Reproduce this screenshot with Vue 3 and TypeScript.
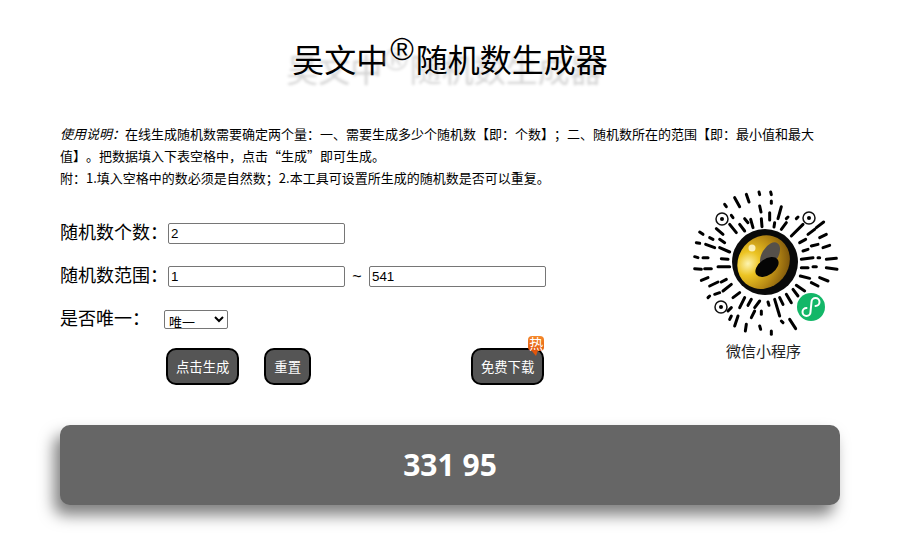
<script lang="ts" setup>
import { ref } from 'vue'

const count = ref('2')
const min = ref('1')
const max = ref('541')
const unique = ref('yes')

// strokes of the mini program code, read off the reference at 3x (centre 256,248)
const strokes: number[][] = [
  [165, 55, 180, 82], [200, 45, 208, 68], [238, 38, 240, 46], [273, 38, 275, 46], [275, 65, 275, 72], [305, 82, 295, 118],
  [240, 80, 244, 98], [195, 118, 205, 130], [135, 75, 140, 82], [155, 108, 160, 115], [110, 148, 130, 165], [150, 135, 170, 160],
  [180, 135, 195, 155], [213, 120, 220, 145], [245, 118, 247, 142], [270, 100, 270, 122], [285, 130, 283, 143], [320, 118, 325, 113],
  [305, 150, 320, 130], [335, 170, 370, 135], [350, 118, 355, 113], [410, 145, 432, 128], [385, 165, 405, 150], [420, 175, 440, 165],
  [360, 190, 378, 180], [395, 200, 415, 195], [430, 205, 450, 198], [370, 215, 385, 210], [365, 240, 400, 235], [415, 235, 420, 235],
  [440, 240, 470, 237], [365, 265, 385, 265], [400, 262, 410, 262], [440, 265, 472, 270], [362, 290, 390, 297], [420, 295, 445, 305],
  [395, 310, 415, 320], [350, 318, 375, 335], [340, 330, 355, 350], [320, 345, 335, 370], [300, 355, 310, 375], [285, 360, 300, 410],
  [265, 368, 268, 378], [330, 420, 348, 448], [305, 425, 310, 430], [275, 455, 275, 465], [240, 365, 225, 385], [245, 395, 245, 405],
  [215, 360, 205, 378], [225, 395, 215, 415], [180, 340, 160, 355], [195, 355, 180, 385], [175, 410, 165, 440], [200, 435, 197, 455],
  [240, 440, 243, 450], [145, 395, 155, 385], [150, 420, 155, 410], [155, 315, 130, 335], [105, 345, 120, 340], [85, 355, 90, 350],
  [140, 300, 125, 308], [90, 320, 115, 308], [65, 303, 85, 295], [150, 262, 115, 262], [95, 268, 75, 268], [65, 270, 45, 268],
  [145, 240, 125, 238], [85, 235, 70, 235], [55, 235, 45, 232], [150, 218, 120, 205], [105, 205, 78, 195], [60, 192, 50, 190],
  [135, 190, 120, 180], [100, 180, 90, 175], [70, 165, 60, 158],
].map((s) => s.map((v, i) => (v - (i % 2 ? 248 : 256)) / 3))
</script>

<template>
  <div class="page">
    <h1 class="title">吴文中<sup>®</sup>随机数生成器</h1>

    <p class="intro">
      <em>使用说明：</em>在线生成随机数需要确定两个量：一、需要生成多少个随机数【即：个数】；二、随机数所在的范围【即：最小值和最大值】。把数据填入下表空格中，点击“生成”即可生成。<br />
      附：1.填入空格中的数必须是自然数；2.本工具可设置所生成的随机数是否可以重复。
    </p>

    <div class="main">
      <div class="form">
        <div class="row">
          <label class="label">随机数个数：</label>
          <input v-model="count" class="field" type="text" />
        </div>
        <div class="row">
          <label class="label">随机数范围：</label>
          <input v-model="min" class="field" type="text" />
          <span class="tilde">~</span>
          <input v-model="max" class="field" type="text" />
        </div>
        <div class="row">
          <label class="label label-select">是否唯一：</label>
          <select v-model="unique" class="choice">
            <option value="yes">唯一</option>
            <option value="no">不唯一</option>
          </select>
        </div>
        <div class="actions">
          <button class="btn" type="button">点击生成</button>
          <button class="btn" type="button">重置</button>
          <button class="btn btn-download" type="button">
            免费下载
            <span class="hot">热</span>
          </button>
        </div>
      </div>

      <div class="mini">
        <svg class="code" width="150" height="150" viewBox="-75 -75 150 150">
          <defs>
            <radialGradient id="gold" cx="30%" cy="28%" r="90%">
              <stop offset="0" stop-color="#fdf4b0" />
              <stop offset="0.25" stop-color="#ecc423" />
              <stop offset="0.6" stop-color="#b98a14" />
              <stop offset="1" stop-color="#6a4509" />
            </radialGradient>
          </defs>
          <line
            v-for="(s, i) in strokes"
            :key="i"
            :x1="s[0]"
            :y1="s[1]"
            :x2="s[2]"
            :y2="s[3]"
            stroke="#000"
            stroke-width="3"
            stroke-linecap="round"
          />
          <g fill="none" stroke="#111" stroke-width="1.5">
            <circle cx="-43" cy="-43" r="6" />
            <circle cx="44" cy="-44" r="6" />
            <circle cx="-44" cy="45" r="6" />
          </g>
          <circle cx="-43" cy="-43" r="2" />
          <circle cx="44" cy="-44" r="2" />
          <circle cx="-44" cy="45" r="2" />
          <circle r="33" fill="#0a0a0a" />
          <ellipse cx="-1" cy="-1" rx="28" ry="25" fill="url(#gold)" transform="rotate(-50)" />
          <ellipse cx="5" cy="-7" rx="14" ry="8" fill="#55504a" transform="rotate(-58 5 -7)" />
          <ellipse cx="2" cy="5" rx="13" ry="8" fill="#050505" transform="rotate(-35 2 5)" />
          <circle cx="-13" cy="-14" r="3.5" fill="#fff8d0" opacity="0.85" />
          <circle cx="46" cy="45" r="15.5" fill="#fff" />
          <circle cx="46" cy="45" r="14" fill="#13b768" />
          <path
            d="M41.5 46A4 4 0 1 0 45.5 50L46.5 40A4 4 0 1 1 50.5 44"
            fill="none"
            stroke="#fff"
            stroke-width="2"
            stroke-linecap="round"
          />
        </svg>
        <div class="caption">微信小程序</div>
      </div>
    </div>

    <div class="result">331 95</div>
  </div>
</template>

<style scoped>
.page {
  box-sizing: border-box;
  width: 920px;
  height: 539px;
  padding: 0 80px 0 60px;
  overflow: hidden;
  color: #000;
  font-family: "Liberation Sans", "Noto Sans CJK SC", sans-serif;
  text-spacing-trim: space-all;
}

.title {
  margin: 0;
  padding-top: 28px;
  line-height: 60px;
  height: 60px;
  font-size: 32px;
  font-weight: 400;
  text-align: center;
  text-shadow: -6px 10px 3px #d4d4d4;
  font-family: "Noto Sans CJK SC", sans-serif;
}

.title sup {
  padding: 0 2px;
  font-family: "Liberation Sans", sans-serif;
  font-size: 32px;
  line-height: 0;
  vertical-align: 12px;
}

.intro {
  width: 760px;
  margin: 35px 0 0;
  font-size: 13px;
  line-height: 22px;
  font-family: "Noto Sans CJK SC", sans-serif;
}

.main {
  display: flex;
  width: 780px;
}

.form {
  flex: 1;
  padding-top: 23px;
}

.row {
  display: flex;
  align-items: center;
  height: 43px;
}

.label {
  width: 108px;
  flex: none;
  margin-bottom: 5px;
  font-size: 18px;
  font-family: "Noto Sans CJK SC", sans-serif;
}

.label-select {
  width: 104px;
}

.field {
  box-sizing: border-box;
  width: 177px;
  height: 21px;
  padding: 1px 2px;
  border: 1px solid #767676;
  border-radius: 2px;
  font-family: "Liberation Sans", sans-serif;
  font-size: 13.33px;
  background: #fff;
}

.tilde {
  width: 24px;
  text-align: center;
  font-size: 16px;
}

.choice {
  box-sizing: border-box;
  width: 64px;
  height: 19px;
  font-size: 13px;
  font-family: "Noto Sans CJK SC", sans-serif;
  border: 1px solid #767676;
  border-radius: 2px;
  background-color: #fff;
}

.actions {
  display: flex;
  gap: 25px;
  padding-left: 106px;
  margin-top: 7px;
}

.btn {
  position: relative;
  box-sizing: border-box;
  height: 37px;
  padding: 0 8px;
  border: 2px solid #000;
  border-radius: 10px;
  background: #555;
  color: #fff;
  font-size: 13.33px;
  font-family: "Noto Sans CJK SC", sans-serif;
  white-space: nowrap;
}

.btn-download {
  margin-left: 135px;
}

.hot {
  position: absolute;
  top: -14px;
  right: -2px;
  width: 16px;
  height: 15px;
  border-radius: 4px;
  background: linear-gradient(#f58a2c, #e2560c);
  color: #fff;
  font-size: 14px;
  line-height: 15px;
  text-align: center;
}

.hot::after {
  content: '';
  position: absolute;
  left: 3px;
  bottom: -5px;
  border-top: 6px solid #e2560c;
  border-left: 5px solid transparent;
  border-right: 2px solid transparent;
}

.mini {
  width: 150px;
  margin-top: -2px;
  text-align: center;
}

.code {
  display: block;
}

.caption {
  margin-top: 4px;
  padding-right: 3px;
  color: #222;
  font-size: 15px;
  line-height: 20px;
  font-family: "Noto Sans CJK SC", sans-serif;
}

.result {
  width: 780px;
  height: 80px;
  margin-top: 40px;
  border-radius: 10px;
  background: #666;
  box-shadow: -6px 10px 15px rgb(0 0 0 / 50%);
  color: #fff;
  font-family: "Open Sans", sans-serif;
  font-size: 30px;
  font-weight: 700;
  line-height: 80px;
  text-align: center;
}
</style>

<style>
body {
  margin: 0;
  background: #fff;
}
</style>
